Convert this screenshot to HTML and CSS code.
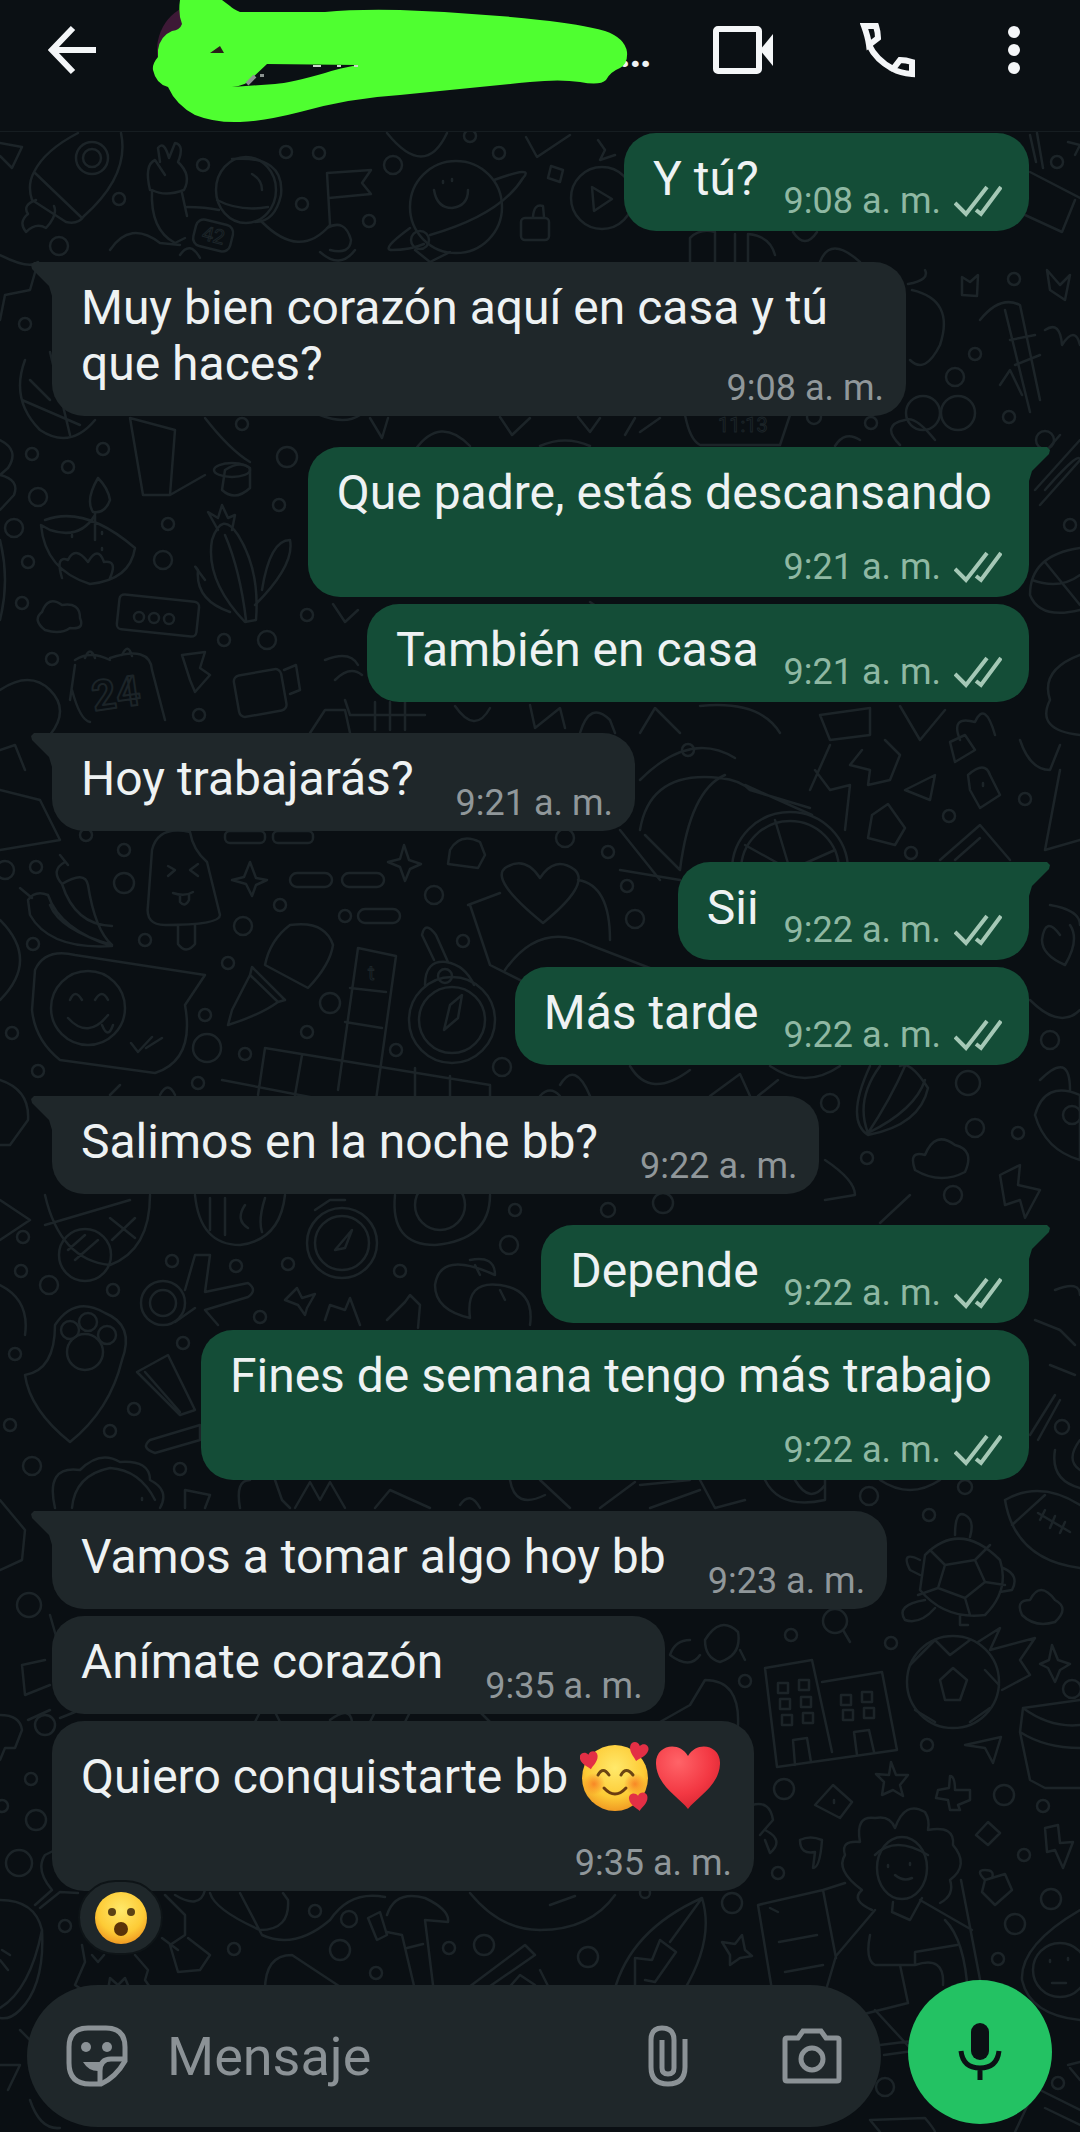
FILE: index.html
```html
<!DOCTYPE html>
<html lang="es">
<head>
    <meta charset="UTF-8">
    <meta name="viewport" content="width=device-width, initial-scale=1.0">
    <title>Chat</title>
    <link rel="stylesheet" href="styles.css">
</head>
<body>
    <!-- doodle wallpaper -->
    <svg class="wallpaper" viewBox="0 0 1080 2132" preserveAspectRatio="xMidYMin slice" aria-hidden="true">
        <g id="dots"></g>

        <!-- top strip -->
        <path d="M78 133Q45 150 34 172Q27 185 32 200L66 222Q78 225 84 216Q130 175 121 133M34 172L82 218M36 200Q22 205 28 214Q18 222 26 232Q36 222 46 228Q58 215 54 206M0 143L22 147L12 168L0 156"/>
        <circle cx="92" cy="158" r="16"/><circle cx="92" cy="158" r="9"/>
        <path d="M150 190Q144 165 155 160L165 175M160 162L158 148Q164 140 169 158L175 143Q185 145 178 162Q192 175 184 190Q165 197 152 190Q150 230 175 243L185 238M182 193L187 216M187 207Q205 207 219 210"/>
        <ellipse cx="246" cy="190" rx="30" ry="33"/><path d="M232 159Q285 155 281 195Q275 222 255 222M217 200Q240 212 268 207M252 174Q262 180 262 190M262 222Q300 260 330 225M110 250Q130 220 160 243L180 245"/>
        <rect x="194" y="222" width="38" height="27" rx="8" transform="rotate(14 213 236)"/>
        <text x="202" y="242" transform="rotate(14 213 236)">42</text>
        <path d="M327 173L371 170L362 183L371 194L329 198M327 173L330 225M327 228Q345 218 351 240Q350 255 330 250"/>
        <circle cx="456" cy="207" r="46"/><path d="M434 190Q437 208 452 208Q468 206 468 190M443 181V183M452 179V181M494 180Q535 165 523 178Q500 215 430 235M410 228Q380 250 392 250Q410 250 424 244"/><circle cx="420" cy="240" r="9"/>
        <rect x="521" y="218" width="28" height="22" rx="4"/><path d="M533 217Q534 203 543 206L544 217M551 166L563 170L560 182L548 178ZM526 137L537 157L570 135M387 133Q425 180 447 133M598 140L605 150L600 160L615 155"/>
        <circle cx="602" cy="198" r="31"/><path d="M592 187L594 211L612 199Z"/>
        <path d="M1030 135L1036 162M1037 133L1043 168M1030 172L1080 198M1025 215L1062 232L1075 200M1068 142L1080 145L1075 155M820 262Q830 235 860 262M690 262V238Q700 228 715 232V262M735 262V234M748 262V234Q770 236 775 255M793 232Q805 250 817 232"/>

        <!-- right of the first incoming bubble -->
        <path d="M962 277L970 282L978 275L977 296L962 295ZM908 284Q930 280 925 270M912 290Q955 300 940 345Q925 375 910 360M1047 270L1060 285L1070 275L1065 300L1050 290ZM980 320Q1000 295 1020 305L1040 400M1005 310L1030 412M1010 340L1035 335M1015 365L1040 355M1045 330Q1060 320 1062 345Q1075 325 1080 345M1000 385L1010 370L1022 395"/>
        <path d="M0 255Q30 270 38 262L30 290L5 295L0 320M25 360Q10 400 40 430Q70 450 95 420M30 380L50 400M22 400L80 425M50 352L70 435M180 255Q190 240 200 258M320 252Q340 270 355 250M415 250L430 262L450 252"/>
        <path d="M130 418L143 495L170 495L205 475M130 418L175 430L170 495M205 418Q230 450 250 462M225 470Q240 460 250 468V488Q235 502 222 490Z"/><ellipse cx="232" cy="470" rx="18" ry="7"/>
        <path d="M320 415Q345 425 360 415M370 418L382 438L388 418M500 417L512 435L530 418M578 417L590 432L600 418M625 435L635 418M640 432L660 418M415 450Q440 415 470 446M540 446Q565 435 590 446M685 415Q690 440 700 445H780L790 415M900 445Q880 425 905 420Q915 415 935 440M835 446Q845 430 860 440"/>
        <text x="718" y="432">11:13</text>
        <path d="M0 440Q20 450 8 468L0 475M0 475Q20 480 14 495L0 510"/>

        <!-- lamp, cactus, ticket, calendar -->
        <path d="M98 478Q85 500 93 512Q105 514 110 500Q108 488 98 478M95 512V540M45 520Q85 505 135 548Q130 580 90 584Q45 570 41 525L50 530Q80 540 95 515M62 578Q55 555 68 560Q75 545 88 562Q98 545 104 562Q118 560 110 578M72 535V537M102 532V534M102 548V550"/>
        <path d="M212 540Q222 510 238 535Q260 570 256 620L245 622Q205 580 212 540M218 530L208 512L218 518L222 505L228 518L235 515L232 530M225 535Q240 570 246 620M205 580Q190 560 198 570Q195 600 230 612M262 590Q270 540 290 540Q295 565 255 605M0 540Q10 580 0 620"/>
        <rect x="118" y="598" width="80" height="35" rx="5" transform="rotate(6 158 615)"/><circle cx="139" cy="617" r="5"/><circle cx="154" cy="618" r="5"/><circle cx="169" cy="619" r="5"/>
        <path d="M45 630Q32 620 42 612Q48 595 62 605Q80 602 80 618Q85 630 70 628Q60 635 45 630M75 660Q90 650 110 660M75 665L70 700M85 658Q90 645 95 658M122 655Q128 642 132 656M110 658Q150 645 152 670L165 720M72 690Q80 720 90 722M0 690Q30 670 50 690Q70 710 50 735M182 655L205 652L200 668L210 675L195 692L190 680Z"/>
        <text class="doodle-day" x="92" y="708" transform="rotate(-8 115 695)">24</text>
        <rect x="236" y="672" width="48" height="42" rx="6" transform="rotate(-10 260 692)"/><path d="M284 670L296 665L300 690L290 694M325 660Q350 650 358 665M335 680Q350 665 362 675M310 733L325 710H345L350 733M345 700L350 715H425M375 702V730M390 702V730M405 702V730M333 604L345 622L358 610M590 602L605 612"/>
        <path d="M1045 490Q1080 450 1080 460M1030 470L1060 435M1035 490L1080 440M1040 505L1080 460M1080 548Q1030 555 1030 595Q1040 620 1080 610M1032 580Q1060 590 1080 575M1045 562L1080 605M1080 655Q1040 670 1050 700Q1035 730 1080 735"/>
        <path d="M455 706Q475 735 490 708M530 705L535 728L560 708L565 728M580 733Q590 700 610 720L615 733M640 733L655 708L680 733M700 706Q760 700 780 733M820 715L870 708V735L830 740ZM900 706L920 740L945 710M960 740Q950 715 975 722Q985 700 995 735M862 750L850 765L870 770L868 785L890 780L900 755L885 740"/>

        <!-- bike, lock, dice -->
        <path d="M640 830Q650 770 720 778Q740 780 750 790L810 808M640 780Q690 730 735 758M620 830L660 880M645 835L680 870M680 870Q690 790 725 775M745 785L812 815M810 790L830 745M815 770L830 790L850 785L845 830M905 790L935 775L930 800ZM888 804L905 828L895 845L868 838L872 815ZM968 775Q985 760 990 775L1000 795L980 808L970 790ZM983 783V786M950 742L965 735L975 750L955 762ZM1020 740Q1030 770 1050 770L1060 745M1060 770L1045 850L1080 840"/>
        <circle cx="790" cy="870" r="58"/><circle cx="790" cy="870" r="49"/><path d="M790 870L775 820M790 870L835 850M790 870L745 845M940 860L980 825L1010 860M955 860L980 838"/>
        <path d="M0 790L40 800L60 840L0 850M0 750L15 745L25 770"/>

        <!-- popsicle, chillis, pen, compass -->
        <path d="M152 850Q158 825 190 832Q193 850 207 862L220 915Q220 925 165 925Q145 925 148 905ZM178 925V944Q186 955 195 944V925M168 866L175 870L168 876M198 864L190 870L198 876M173 893Q185 897 193 892M180 896V902Q185 908 189 900V895"/>
        <path d="M65 862Q50 870 62 884Q85 870 88 885Q95 930 112 945Q60 930 50 905M62 884Q75 925 112 926M28 900Q35 890 48 895Q60 930 112 946Q50 950 30 915ZM20 888L32 898M60 855L68 865M250 862L256 878L267 880L256 885L252 896L246 884L232 880L244 877ZM404 845L409 860L421 864L410 869L405 881L400 867L388 862L400 859ZM450 850Q460 832 480 842L485 855L478 868L448 864Z"/>
        <rect x="290" y="873" width="42" height="14" rx="7"/><rect x="342" y="873" width="42" height="14" rx="7"/><rect x="358" y="909" width="42" height="14" rx="7"/><rect x="225" y="831" width="40" height="12" rx="5"/><rect x="273" y="831" width="40" height="12" rx="5"/>
        <path d="M290 925Q325 920 333 945Q330 965 308 988L265 965Q270 940 290 925M252 967L285 1000L278 1002L250 975ZM250 975L232 1010L228 1025Q260 1015 278 1002"/>
        <path d="M543 923Q490 880 505 868Q525 855 540 878Q555 855 575 870Q590 885 543 923M468 905L500 893M470 905L490 965L540 990M578 880Q610 885 610 940M505 970Q540 920 590 945L655 970M620 870L680 880"/>
        <path d="M358 948L396 956L376 1100M358 948L338 1090M350 988L386 992M345 1022L382 1028M265 1048L490 1085M265 1048L258 1095M302 1055L295 1095M222 1080L315 1098M415 1068V1100M450 1076V1100M490 1085V1100"/><text x="368" y="980">t</text>
        <circle cx="452" cy="1020" r="43"/><circle cx="452" cy="1020" r="33"/><path d="M444 1030L450 1005L462 995L458 1018ZM425 985Q425 960 446 962Q465 965 474 985M434 960L422 935Q425 920 436 935L448 962"/><circle cx="445" cy="976" r="7"/>
        <path d="M35 970Q45 948 75 955L205 975L185 1005Q195 1060 155 1073L60 1060Q35 1040 32 1010Z"/><circle cx="88" cy="1008" r="37"/><path d="M70 1000Q75 988 82 1000M95 1000Q102 988 108 1000M68 1018Q88 1040 108 1015M102 1025Q108 1040 113 1025M131 1043L138 1052L152 1037M146 1048L162 1038M0 920Q40 960 0 1000M0 1080Q30 1090 28 1120L10 1145H0"/>
        <path d="M1060 935Q1045 915 1042 940Q1042 955 1065 965Q1080 940 1070 925M1050 905Q1080 910 1080 925M1030 1000Q1060 1030 1080 1010M1040 1080Q1070 1050 1070 1090M1035 1115Q1045 1080 1080 1095V1160Q1045 1150 1035 1115"/><circle cx="1072" cy="1115" r="9"/>
        <path d="M630 1066Q650 1100 690 1070M770 1066Q805 1090 840 1066M710 1096L740 1074L750 1096M758 1096L778 1080M870 1066Q845 1120 868 1135Q920 1125 928 1088Q910 1060 900 1066M868 1133Q855 1100 880 1066M868 1133Q890 1100 905 1066M868 1133Q915 1110 925 1080M915 1170Q908 1150 925 1155Q935 1130 955 1145Q975 1150 965 1172Q940 1185 915 1170M1000 1175L1020 1165L1018 1185L1040 1190L1025 1218L1020 1200L1005 1205ZM110 1095L120 1085M160 1095Q168 1080 175 1095M540 1096Q550 1085 560 1096M560 1085Q575 1060 590 1096M825 1160Q855 1180 855 1195L825 1200M880 1223L910 1195"/>

        <!-- stopwatch, teddy, anatomy row -->
        <path d="M45 1195Q60 1260 110 1265Q150 1250 150 1195M45 1225L130 1200M110 1218L135 1238M135 1218L112 1240M68 1250L85 1235M75 1260L98 1240M195 1195Q200 1245 240 1245Q280 1240 285 1195M210 1198V1230M225 1198V1235M245 1205Q235 1220 248 1228M265 1198Q258 1220 262 1232M0 1200L30 1220L0 1240"/>
        <circle cx="85" cy="1255" r="26"/><circle cx="342" cy="1243" r="35"/><circle cx="342" cy="1243" r="27"/><path d="M335 1250L352 1230L345 1248ZM315 1210L330 1200H345M395 1195Q390 1245 435 1245Q490 1240 490 1195"/><circle cx="440" cy="1205" r="25"/>
        <circle cx="163" cy="1303" r="22"/><circle cx="163" cy="1303" r="13"/>
        <path d="M185 1290L195 1255H210L205 1292L248 1283Q258 1290 248 1297L205 1310L218 1325M175 1322L195 1308M297 1288L302 1298L315 1294L307 1308L305 1315L298 1305L285 1300ZM325 1320L330 1305L345 1310L350 1298L360 1325M387 1320L405 1302L410 1295L420 1305L418 1328M470 1260Q495 1255 495 1275Q440 1250 435 1285Q435 1310 470 1318M470 1318Q465 1280 500 1285Q535 1290 530 1325M475 1265L480 1275M500 1290L505 1300M0 1285Q30 1300 25 1335"/>
        <circle cx="70" cy="1330" r="9"/><circle cx="88" cy="1322" r="9"/><circle cx="107" cy="1335" r="9"/><ellipse cx="85" cy="1352" rx="18" ry="18"/><path d="M55 1325Q75 1295 105 1313Q135 1325 122 1360Q110 1410 70 1442Q30 1410 25 1375Q55 1370 55 1325M137 1372L168 1355L195 1410L180 1415ZM145 1372L180 1412M150 1440L200 1425V1440L155 1453Q140 1448 150 1440"/>
        <path d="M55 1508Q45 1465 80 1470Q100 1450 120 1462Q150 1460 150 1480Q170 1490 160 1508M72 1508Q75 1475 110 1468Q140 1470 155 1500M142 1498V1500M185 1508V1490L210 1495L205 1508M240 1508Q235 1480 250 1480M275 1480L282 1500L290 1508M295 1508L310 1482L320 1500L330 1482L345 1508M375 1508L390 1490L430 1508M460 1505Q470 1490 480 1508M510 1480Q515 1510 545 1495M540 1480L570 1508M600 1508L635 1482M650 1508L700 1490M640 1485L690 1480M700 1480L715 1508L745 1500M765 1480Q780 1510 825 1500V1480M795 1480Q810 1505 825 1485M880 1480Q910 1500 940 1480M1035 1320L1060 1330L1075 1345M1050 1365L1075 1375M1030 1435L1055 1395M1038 1440L1060 1400M1055 1450Q1050 1480 1080 1488M1080 1440Q1065 1460 1080 1470M1055 1290Q1080 1280 1080 1295"/>

        <!-- football, turtle, ball, buildings -->
        <path d="M1005 1500Q1040 1480 1080 1505M1005 1500Q1015 1560 1080 1568M1012 1525L1045 1495M1038 1513L1070 1532M1040 1520L1045 1510M1050 1528L1055 1516M1060 1533L1065 1522"/>
        <path d="M925 1555Q960 1520 1000 1560Q1010 1590 985 1615Q945 1620 920 1590ZM945 1565L975 1560L985 1582L965 1598L938 1588ZM945 1565L930 1550M975 1560L990 1545M985 1582L1005 1585M965 1598L970 1615M938 1588L918 1595M955 1535Q955 1510 965 1515Q975 1520 970 1537M920 1560Q900 1550 910 1570L920 1575M1003 1568Q1020 1575 1012 1590L1000 1592M925 1600Q895 1605 905 1620Q920 1625 935 1608M960 1615V1625H968M1022 1615Q1015 1600 1030 1600Q1040 1580 1055 1600Q1070 1608 1055 1622Q1035 1628 1022 1615"/>
        <circle cx="953" cy="1682" r="46"/><path d="M940 1680L953 1668L967 1680L960 1700H945ZM935 1640L950 1655L970 1640M910 1665L920 1655L935 1640M999 1685L985 1670M915 1710L935 1722M970 1722L990 1708M978 1642L1000 1628L990 1650L1035 1638L1020 1660L1030 1675L1002 1690M1052 1645L1058 1660L1070 1664L1060 1670L1055 1682L1048 1668L1040 1664L1049 1660Z"/>
        <path d="M765 1668L812 1660L832 1752M765 1668L777 1767L897 1750L882 1672L822 1682M795 1765L793 1740L807 1738L811 1762M857 1755L854 1732L869 1730L874 1752"/>
        <g id="windows"></g>
        <path d="M690 1640Q675 1640 670 1655Q690 1670 700 1655M705 1640Q720 1615 738 1632Q742 1655 720 1662Q705 1658 705 1640M740 1650L745 1660M843 1630L850 1642M660 1722L690 1705L705 1680Q740 1680 738 1725M965 1745L1001 1737L993 1763L985 1748ZM1023 1708L1080 1700M1023 1708Q1050 1728 1080 1725M1020 1732Q1045 1748 1080 1748M1023 1708L1020 1732L1030 1780L1045 1788H1080"/>
        <path d="M891 1762L896 1775L908 1775L900 1785L903 1796L893 1790L882 1795L884 1782L876 1774L889 1775ZM950 1776Q955 1776 955 1790L970 1790V1800L958 1805L960 1810H950L948 1800L936 1798L938 1790L949 1788ZM833 1785L852 1802L840 1818L815 1805ZM834 1800V1803M988 1822L1000 1833L988 1845L976 1835ZM800 1840Q800 1855 815 1852L813 1868Q820 1868 822 1840Q810 1835 800 1840M1045 1828L1058 1825L1060 1843L1073 1842L1063 1868L1055 1850L1047 1852ZM985 1880L1005 1874L1012 1890L995 1905L982 1892ZM985 1880Q975 1870 985 1870Q995 1870 992 1878M752 1805Q770 1800 773 1820L760 1835M765 1830Q785 1840 770 1853L765 1840"/>

        <!-- reader with curly hair -->
        <path d="M872 1910Q850 1900 862 1890Q835 1870 845 1855Q840 1840 860 1842Q855 1815 875 1818Q890 1815 895 1828Q905 1800 925 1812Q930 1820 928 1830Q955 1825 953 1845Q970 1865 950 1880Q955 1895 940 1903"/><ellipse cx="902" cy="1868" rx="25" ry="31"/><path d="M875 1855Q895 1835 928 1855M888 1865V1867M910 1863V1865M895 1875Q903 1882 912 1878M893 1902L892 1912L910 1920L922 1898M875 1910L836 1956L826 1990M920 1900L972 1930M945 1920Q965 1940 968 1995M870 1935Q865 1960 875 1965L915 1965M957 1945L915 1952V1965Q945 1955 943 1985M900 1965L908 2003L860 2015M836 1958L823 1890L758 1905L772 1990M845 1883L823 1890M961 1880L982 1990M779 1942L817 1935M785 1972L823 1965M770 1908L778 1912M875 2010L910 2048M880 2045L920 2040M884 2055L920 2050"/>
        <circle cx="1060" cy="1970" r="27"/><path d="M1080 1910Q1020 1945 1022 1980Q1030 2015 1080 2020M1050 1960V1962M1068 1958V1960M1052 1983H1066M722 1942L735 1944L742 1935L745 1950L752 1956L740 1958L730 1965L730 1955ZM614 1992Q630 1930 702 1898Q715 1940 683 1992M635 1990V1958L652 1960L660 1940L676 1952L655 1982L645 1980M702 1898L670 1942M540 1930Q590 1930 615 1895M550 1905L575 1896M540 1970L550 1990"/>
        <path d="M870 2120L925 2118Q935 2130 935 2132M870 2120L880 2132M1040 2090L1080 2110M1030 2100L1015 2132M1045 2108L1080 2125M1068 2065L1080 2062M1070 2068L1080 2080"/>

        <!-- hammer strip -->
        <path d="M0 1900Q35 1900 42 1930Q45 1985 20 2010Q10 2020 0 2018M42 1930Q30 1990 0 2008M0 1960L8 1970M2 1950L10 1955M35 1905L52 1890Q35 1870 45 1855L55 1850M40 1908L60 1892L78 1893M82 1945L85 1962L75 1985L90 1995M135 1955L148 1970L145 1980L152 1990M92 1955L98 1962L104 1955M108 1990L110 1978L118 1985L125 1978L130 1990"/>
        <path d="M165 1895L185 1915V1935L170 1945L178 1972L200 1970L210 1955L188 1938M162 1938L178 1950M175 1895Q200 1910 205 1890M210 1893Q215 1910 260 1930Q290 1930 288 1900L283 1893M240 1893L262 1935Q295 1950 330 1920Q350 1890 385 1897M265 1990Q265 1955 292 1955L345 1990M368 1918L380 1912L387 1935L377 1940ZM387 1915Q395 1890 425 1898Q450 1910 448 1922L425 1920L433 1985M387 1932L402 1935L415 1990M407 1948L423 1944M465 1990L525 1945L535 1955L480 1993M470 1893Q500 1930 540 1930M505 1992L520 1975L535 1985M20 2030L30 2040M0 2065H20L8 2090M30 2100Q40 2130 60 2128M28 1720L50 1710M0 1715Q20 1715 22 1730L15 1748H5L0 1760M22 1665L45 1660M22 1665L25 1695L50 1685"/>
        <path d="M60 1718L75 1712M255 1722L260 1712M275 1712L280 1722M330 1720Q350 1705 352 1722M370 1722L375 1712M405 1722L410 1712M480 1712L490 1722M0 1500L25 1530L22 1560L0 1570M50 1615L60 1650"/>
    </svg>

    <header class="topbar">
        <button class="icon-btn" aria-label="Atrás">
            <svg width="48" height="50" viewBox="0 0 48 50"><path d="M48 25H5M25 3L4 25L25 47" fill="none" stroke="#f4f6f8" stroke-width="6"/></svg>
        </button>
        <div class="contact">
            <span class="avatar"></span>
            <h1 class="contact-name">…</h1>
            <!-- marker stroke hiding the contact -->
            <svg class="marker" width="480" height="124" viewBox="150 0 480 124" aria-hidden="true">
                <path fill="#4fff30" d="M180 0Q178 14 182 24Q180 30 172 31Q160 36 158 50V57Q152 64 153 70Q156 84 168 87Q176 105 195 115Q215 123 240 122Q265 121 300 112Q350 98 400 95Q470 88 530 82Q560 79 580 82Q600 86 606 80Q610 72 620 68Q628 64 627 52Q625 38 605 31Q580 24 540 20Q470 12 400 10Q355 9 325 12L240 12Q233 9 230 6L222 0Z"/>
                <path fill="#2a2019" d="M210 53L220 46L224 53Z"/>
                <path fill="#0b1014" d="M267 64L358 65Q340 68 325 73Q290 83 275 84L232 87Q246 86 252 78Z"/>
                <path d="M247 84L255 76M262 74V77" stroke="#8c9391" stroke-width="4"/>
                <path d="M313 66H321M337 66H341M354 66H358" stroke="#c9d6c9" stroke-width="2"/>
            </svg>
        </div>
        <div class="actions">
            <button class="icon-btn" aria-label="Videollamada">
                <svg width="62" height="50" viewBox="0 0 62 50"><rect x="4" y="4" width="43" height="42" rx="2" fill="none" stroke="#f4f6f8" stroke-width="6"/><path d="M48 25L61 9V41Z" fill="#f4f6f8"/></svg>
            </button>
            <button class="icon-btn" aria-label="Llamar">
                <svg width="56" height="56" viewBox="0 0 56 56"><path d="M4 4H16Q18 10 18 16L9 23Q8 15 4 4ZM52 52V40Q46 38 40 38L33 47Q40 51 52 52ZM9 23Q16 38 33 47" fill="none" stroke="#f4f6f8" stroke-width="6"/></svg>
            </button>
            <button class="icon-btn" aria-label="Más opciones">
                <svg width="24" height="50" viewBox="0 0 24 50"><g fill="#f4f6f8"><circle cx="12" cy="7" r="6"/><circle cx="12" cy="25" r="6"/><circle cx="12" cy="43" r="6"/></g></svg>
            </button>
        </div>
    </header>

    <main class="chat">
        <div class="message out">
            <p class="text">Y tú?</p>
            <span class="time">9:08 a. m.</span>
        </div>
        <div class="message in first wrapped">
            <p class="text">Muy bien corazón aquí en casa y tú que haces?</p>
            <span class="time">9:08 a. m.</span>
        </div>
        <div class="message out first stacked">
            <p class="text">Que padre, estás descansando</p>
            <span class="time">9:21 a. m.</span>
        </div>
        <div class="message out">
            <p class="text">También en casa</p>
            <span class="time">9:21 a. m.</span>
        </div>
        <div class="message in first">
            <p class="text">Hoy trabajarás?</p>
            <span class="time">9:21 a. m.</span>
        </div>
        <div class="message out first">
            <p class="text">Sii</p>
            <span class="time">9:22 a. m.</span>
        </div>
        <div class="message out">
            <p class="text">Más tarde</p>
            <span class="time">9:22 a. m.</span>
        </div>
        <div class="message in first">
            <p class="text">Salimos en la noche bb?</p>
            <span class="time">9:22 a. m.</span>
        </div>
        <div class="message out first">
            <p class="text">Depende</p>
            <span class="time">9:22 a. m.</span>
        </div>
        <div class="message out stacked">
            <p class="text">Fines de semana tengo más trabajo</p>
            <span class="time">9:22 a. m.</span>
        </div>
        <div class="message in first">
            <p class="text">Vamos a tomar algo hoy bb</p>
            <span class="time">9:23 a. m.</span>
        </div>
        <div class="message in">
            <p class="text">Anímate corazón</p>
            <span class="time">9:35 a. m.</span>
        </div>
        <div class="message in stacked with-emoji">
            <p class="text">
                <span>Quiero conquistarte bb</span>
                <svg class="emoji" width="70" height="70" viewBox="0 0 70 70" role="img" aria-label="Cara con corazones">
                    <defs>
                        <radialGradient id="skin" cx=".5" cy=".35" r=".68">
                            <stop offset="0" stop-color="#ffe96b"/><stop offset=".65" stop-color="#fdcb36"/><stop offset="1" stop-color="#ef9420"/>
                        </radialGradient>
                        <radialGradient id="blush"><stop offset="0" stop-color="#f6701f" stop-opacity=".75"/><stop offset="1" stop-color="#f6701f" stop-opacity="0"/></radialGradient>
                        <radialGradient id="red" cx=".35" cy=".25" r=".85"><stop offset="0" stop-color="#ff6468"/><stop offset=".6" stop-color="#f33843"/><stop offset="1" stop-color="#d3222f"/></radialGradient>
                        <path id="heart" d="M33 66C24 54 2 43 1 21C0 2 24 -3 33 13C42 -3 66 2 65 21C64 43 42 54 33 66Z"/>
                    </defs>
                    <circle cx="35" cy="36" r="33" fill="url(#skin)"/>
                    <circle cx="14" cy="42" r="11" fill="url(#blush)"/><circle cx="55" cy="42" r="11" fill="url(#blush)"/>
                    <path d="M18 33Q23 24 29 33M41 33Q46 24 53 33" fill="none" stroke="#6b4513" stroke-width="3" stroke-linecap="round"/>
                    <path d="M24 46Q35 58 46 46" fill="none" stroke="#6b3c10" stroke-width="3" stroke-linecap="round"/>
                    <use href="#heart" fill="#e32f45" transform="translate(0 9) rotate(-10 9 9) scale(.28)"/>
                    <use href="#heart" fill="#e32f45" transform="translate(49 0) rotate(14 9 9) scale(.29)"/>
                    <use href="#heart" fill="#e32f45" transform="translate(49 50) rotate(-6 9 9) scale(.29)"/>
                </svg>
                <svg class="emoji" width="68" height="68" viewBox="0 0 66 68" role="img" aria-label="Corazón rojo"><use href="#heart" fill="url(#red)"/></svg>
            </p>
            <span class="time">9:35 a. m.</span>
            <button class="reaction" aria-label="Reacción: cara asombrada">
                <svg width="52" height="52" viewBox="0 0 52 52">
                    <circle cx="26" cy="26" r="26" fill="url(#skin)"/>
                    <circle cx="17" cy="20" r="4" fill="#5b4214"/><circle cx="36" cy="20" r="4" fill="#5b4214"/>
                    <ellipse cx="26" cy="37" rx="7" ry="7" fill="#5a3208"/>
                </svg>
            </button>
        </div>
    </main>

    <footer class="composer">
        <div class="field">
            <button class="icon-btn" aria-label="Stickers">
                <svg width="62" height="62" viewBox="0 0 62 62"><g fill="none" stroke="#8b9296" stroke-width="5"><path d="M22 3H40Q59 3 59 22V36Q50 52 35 59H24Q3 59 3 38V22Q3 3 22 3Z"/><path d="M58 34H45Q34 34 34 46V58"/></g><g fill="#8b9296"><circle cx="20" cy="22" r="5"/><circle cx="41" cy="22" r="5"/><path d="M17 37H39Q34 40 34 46Q23 47 17 37Z"/></g></svg>
            </button>
            <input class="input" type="text" placeholder="Mensaje" aria-label="Mensaje">
            <button class="icon-btn" aria-label="Adjuntar">
                <svg width="40" height="62" viewBox="0 0 40 62"><path d="M37 14V42Q37 59 20 59Q3 59 3 42V15Q3 3 14 3Q26 3 26 15V43Q26 49 20 49Q14 49 14 43V15" fill="none" stroke="#8b9296" stroke-width="5"/></svg>
            </button>
            <button class="icon-btn camera" aria-label="Cámara">
                <svg width="60" height="56" viewBox="0 0 60 56"><g fill="none" stroke="#8b9296" stroke-width="5"><path d="M5 10H16L21 3H39L44 10H55Q57 10 57 12V51Q57 53 55 53H5Q3 53 3 51V12Q3 10 5 10Z"/><circle cx="30" cy="31" r="11"/></g></svg>
            </button>
        </div>
        <button class="mic" aria-label="Mensaje de voz">
            <svg width="44" height="60" viewBox="0 0 44 60"><rect x="13" y="1" width="18" height="37" rx="9" fill="#0b1014"/><path d="M3 29Q5 46 22 46Q39 46 41 29M22 46V58" fill="none" stroke="#0b1014" stroke-width="5"/></svg>
        </button>
    </footer>

    <script src="script.js"></script>
</body>
</html>
```
FILE: styles.css
```css
* {
    box-sizing: border-box;
}

body {
    margin: 0;
    min-height: 100vh;
    position: relative;
    display: flex;
    flex-direction: column;
    background-color: #0a0f13;
    color: #eef2f3;
    font-family: Roboto, "Liberation Sans", sans-serif;
}

button {
    padding: 0;
    border: none;
    background: none;
    cursor: pointer;
}

svg {
    display: block;
}

.wallpaper {
    position: absolute;
    top: 0;
    left: 0;
    width: 100%;
    height: 100%;
    z-index: -1;
    fill: none;
    stroke: #1c2428;
    stroke-width: 2.5;
    stroke-linejoin: round;
    stroke-linecap: round;
}

.wallpaper text {
    font-size: 20px;
    stroke-width: 1;
}

.wallpaper .doodle-day {
    font-size: 42px;
    font-weight: bold;
    stroke-width: 2;
}

.topbar {
    height: 132px;
    padding: 0 54px 31px 48px;
    display: flex;
    align-items: center;
    background-color: #0b1014;
    border-bottom: 1px solid #161d21;
}

.icon-btn {
    flex: none;
}

.contact {
    flex: 1;
    height: 100%;
    margin-left: 61px;
    position: relative;
    display: flex;
    align-items: center;
    justify-content: space-between;
}

.avatar {
    width: 96px;
    height: 96px;
    border-radius: 50%;
    background-color: #3d1936;
}

.contact-name {
    margin: 0;
    font-size: 48px;
    font-weight: 500;
}

.marker {
    position: absolute;
    top: 0;
    left: -7px;
}

.actions {
    margin-left: 60px;
    display: flex;
    align-items: center;
    gap: 86px;
}

.chat {
    padding: 1px 51px 0 52px;
    display: flex;
    flex-direction: column;
    align-items: flex-start;
    gap: 7px;
}

.message {
    position: relative;
    max-width: 854px;
    padding: 18px 27px 10px 29px;
    border-radius: 32px;
    display: flex;
    align-items: flex-end;
}

.message.first {
    margin-top: 24px;
}

.message.in {
    padding-right: 22px;
    padding-bottom: 8px;
    gap: 42px;
    background-color: #1f272a;
}

.message.out {
    align-self: flex-end;
    gap: 25px;
    background-color: #144d37;
}

.text {
    margin: 0;
    padding-bottom: 14px;
    font-size: 48px;
    line-height: 56px;
}

.in .text {
    padding-bottom: 16px;
}

.time {
    display: flex;
    align-items: center;
    gap: 13px;
    font-size: 36px;
    line-height: 40px;
    color: #90979a;
    white-space: nowrap;
}

.out .time {
    color: #8fb8a3;
}

.ticks {
    width: 48px;
    height: 32px;
}

/* long text, time sits in the corner of the last line */
.message.wrapped {
    display: grid;
}

.wrapped .text,
.wrapped .time {
    grid-area: 1 / 1;
}

.wrapped .time {
    place-self: end;
}

.message.stacked {
    flex-direction: column;
    gap: 12px;
}

.stacked .text {
    padding-right: 10px;
}

/* tails */
.message.first::before {
    content: "";
    position: absolute;
    top: 0;
    width: 32px;
    height: 34px;
    background-color: inherit;
}

.in.first {
    border-top-left-radius: 0;
}

.in.first::before {
    left: -21px;
    clip-path: polygon(3px 0, 100% 0, 100% 100%, 21px 100%, 18px 24px, 1px 7px, 0 3px);
}

.out.first {
    border-top-right-radius: 0;
}

.out.first::before {
    right: -21px;
    clip-path: polygon(0 0, 29px 0, 32px 3px, 31px 7px, 14px 24px, 11px 100%, 0 100%);
}

.with-emoji .text {
    display: flex;
    align-items: center;
    gap: 4px;
    line-height: 76px;
}

.with-emoji .text span {
    margin-right: 8px;
}

.reaction {
    position: absolute;
    left: 26px;
    bottom: -64px;
    width: 85px;
    height: 75px;
    border-radius: 38px;
    border: 2px solid #0e1417;
    background-color: #1f272a;
    display: flex;
    align-items: center;
    justify-content: center;
}

.composer {
    margin-top: auto;
    padding: 88px 28px 5px 27px;
    display: flex;
    align-items: flex-end;
    gap: 27px;
}

.field {
    flex: 1;
    min-width: 0;
    height: 142px;
    padding: 0 39px;
    border-radius: 71px;
    display: flex;
    align-items: center;
    background-color: #1f272a;
}

.input {
    flex: 1;
    min-width: 0;
    margin: 0 39px;
    padding: 0;
    border: none;
    outline: none;
    background: none;
    color: #eef2f3;
    font-family: inherit;
    font-size: 54px;
}

.input::placeholder {
    color: #8b9296;
    opacity: 1;
}

.camera {
    margin-left: 94px;
}

.mic {
    flex: none;
    width: 144px;
    height: 144px;
    margin-bottom: 3px;
    border-radius: 50%;
    display: flex;
    align-items: center;
    justify-content: center;
    background-color: #23c263;
}
```
FILE: script.js
```js
const svgNs = "http://www.w3.org/2000/svg";

// small circles scattered over the wallpaper: x, y, radius
const dots = [
    [203, 165, 6], [286, 152, 6], [319, 153, 6], [393, 165, 9], [499, 153, 6], [119, 199, 6], [302, 204, 6],
    [369, 221, 6], [59, 246, 9], [470, 136, 6], [1057, 162, 6], [1014, 279, 6], [25, 324, 6], [975, 354, 6],
    [955, 377, 9], [923, 413, 17], [958, 413, 17], [1009, 417, 6], [814, 417, 7], [871, 423, 6], [242, 424, 6],
    [103, 449, 6], [32, 454, 6], [68, 467, 6], [287, 457, 10], [279, 505, 6], [38, 497, 9], [168, 524, 6],
    [14, 528, 9], [163, 560, 9], [28, 562, 6], [22, 603, 6], [267, 640, 9], [307, 615, 6], [52, 659, 6],
    [224, 640, 6], [199, 715, 6], [1070, 525, 6], [1045, 440, 9],
    [688, 750, 6], [86, 835, 6], [124, 850, 6], [565, 838, 9], [608, 852, 6], [36, 867, 6], [124, 883, 10],
    [434, 895, 9], [280, 905, 6], [243, 926, 9], [345, 916, 6], [145, 940, 6], [33, 944, 6], [463, 941, 6],
    [228, 963, 6], [330, 1003, 10], [205, 1015, 6], [12, 1033, 6], [307, 1032, 6], [207, 1048, 14], [245, 1054, 6],
    [396, 1050, 6], [502, 1067, 9], [38, 1071, 6], [198, 1083, 6], [627, 886, 6], [635, 919, 9], [949, 816, 6],
    [911, 853, 6], [1025, 799, 6], [1050, 1040, 9], [968, 1083, 12], [830, 1103, 9], [975, 1128, 9], [1018, 1133, 6],
    [867, 1158, 6], [953, 1195, 9], [515, 1210, 6], [608, 1210, 7], [663, 1203, 10], [5, 870, 9],
    [23, 1237, 6], [172, 1261, 6], [236, 1266, 6], [288, 1264, 6], [509, 1245, 9], [400, 1271, 6], [21, 1271, 6],
    [49, 1285, 9], [113, 1290, 6], [260, 1317, 6], [183, 1343, 6], [15, 1354, 6], [134, 1409, 6], [10, 1425, 6],
    [110, 1431, 6], [32, 1466, 9], [180, 1469, 6], [965, 1487, 7], [869, 1496, 9], [929, 1515, 6], [29, 1605, 12],
    [791, 1635, 6], [835, 1621, 12], [891, 1643, 6], [745, 1681, 6], [1062, 1427, 7],
    [927, 1745, 6], [784, 1789, 10], [1004, 1795, 10], [1043, 1806, 6], [1024, 1855, 6], [778, 1873, 6],
    [732, 1903, 10], [1051, 1899, 10], [1015, 1924, 10], [588, 1957, 10], [998, 1959, 6], [1072, 1689, 9],
    [1058, 2083, 6], [885, 2087, 9], [645, 1893, 5], [45, 1725, 10], [31, 1779, 6], [36, 1820, 10], [2, 1806, 6],
    [19, 1863, 13], [65, 1926, 6], [234, 1949, 6], [315, 1911, 6], [349, 1919, 8], [340, 1950, 10], [376, 1973, 6],
    [449, 1948, 6], [484, 1945, 10]
];

const dotLayer = document.getElementById("dots");
dots.forEach(([x, y, r]) => {
    const dot = document.createElementNS(svgNs, "circle");
    dot.setAttribute("cx", x);
    dot.setAttribute("cy", y);
    dot.setAttribute("r", r);
    dotLayer.appendChild(dot);
});

// windows of the two buildings
const windows = [
    [778, 1683], [799, 1680], [780, 1699], [801, 1697], [782, 1715], [803, 1713],
    [841, 1695], [862, 1692], [843, 1710], [864, 1708]
];

const windowLayer = document.getElementById("windows");
windows.forEach(([x, y]) => {
    const pane = document.createElementNS(svgNs, "rect");
    pane.setAttribute("x", x);
    pane.setAttribute("y", y);
    pane.setAttribute("width", 10);
    pane.setAttribute("height", 10);
    windowLayer.appendChild(pane);
});

// sent messages get the double tick after the time
document.querySelectorAll(".out .time").forEach(time => {
    time.insertAdjacentHTML("beforeend",
        `<svg class="ticks" viewBox="0 0 48 32" fill="none" stroke="#a5c8b6" stroke-width="4" role="img" aria-label="Entregado">
            <path d="M1 18L12 29L33 2M22 25L27 29L47 2"/>
        </svg>`);
});
```
